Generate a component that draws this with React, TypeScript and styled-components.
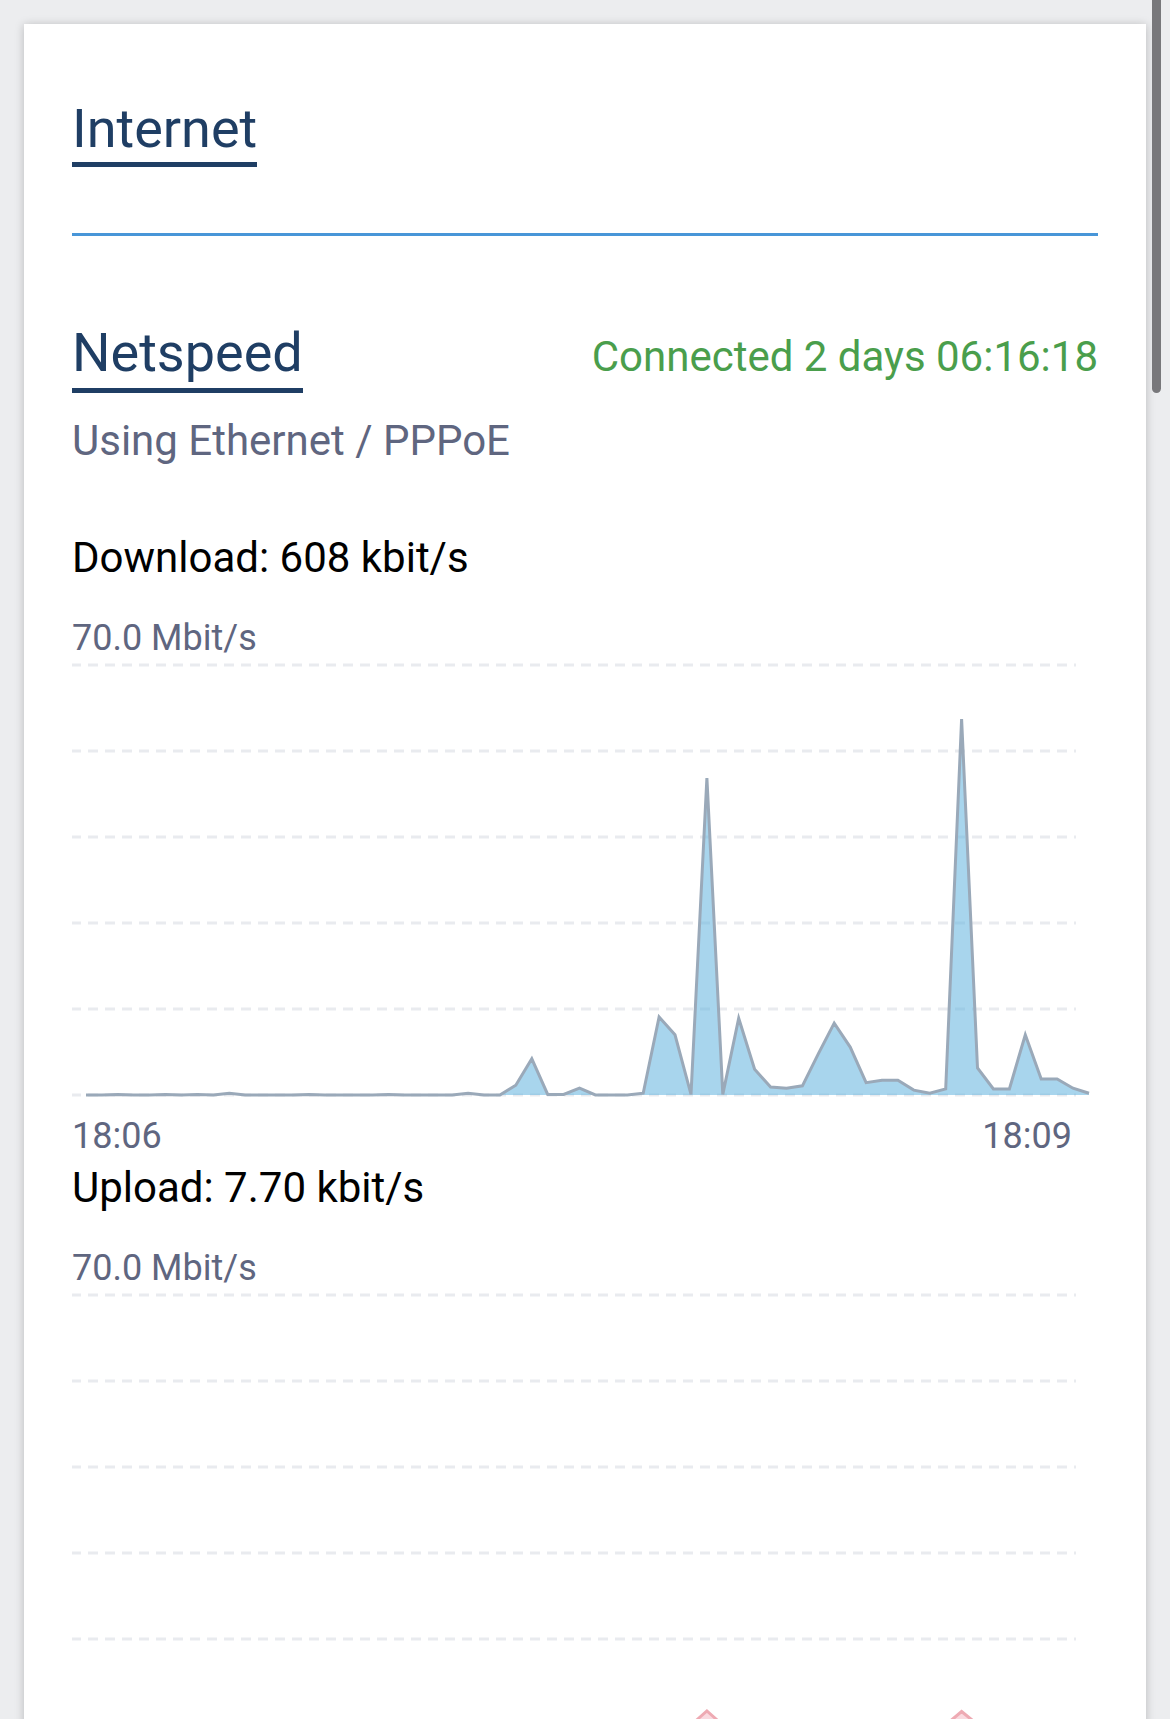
import React from 'react';
import styled, {createGlobalStyle} from 'styled-components';

const GlobalStyle = createGlobalStyle`
  html, body {
    margin: 0;
    padding: 0;
    overflow: hidden;
  }

  body {
    background: #ecedef;
    font-family: Roboto, "Noto Sans", "Liberation Sans", sans-serif;
  }
`

const Page = styled.div`
  padding: 24px;
`

const Card = styled.section`
  background: #ffffff;
  box-shadow: 0 1px 9px rgba(0, 0, 0, 0.22);
  padding: 72px 48px 48px;
`

const Header = styled.div`
  display: flex;
  padding-bottom: 66px;
  border-bottom: 3px solid #4896d8;
`

const Title = styled.h2<{ $gap?: number }>`
  margin: 0;
  font-size: 54px;
  line-height: 66px;
  font-weight: 400;
  color: #1f3e64;
  padding-bottom: ${p => p.$gap ?? 0}px;
  border-bottom: 5px solid #1f3e64;
`

const SectionHead = styled.div`
  display: flex;
  justify-content: space-between;
  align-items: baseline;
  margin-top: 84px;
`

const Status = styled.span`
  font-size: 42px;
  line-height: 50px;
  color: #4a9e4c;
`

const Subtitle = styled.div`
  margin-top: 23px;
  font-size: 42px;
  line-height: 50px;
  color: #5f6680;
`

const Rate = styled.div<{ $top: number }>`
  margin-top: ${p => p.$top}px;
  font-size: 42px;
  line-height: 50px;
  color: #000000;
`

const AxisLabel = styled.div`
  margin-top: 34px;
  font-size: 36px;
  line-height: 42px;
  color: #5f6680;
`

const Plot = styled.svg`
  display: block;
  margin-top: 2px;
  width: 100%;
  height: 440px;
`

const TimeRow = styled.div`
  display: flex;
  justify-content: space-between;
  margin-top: 14px;
  padding-right: 26px;
  font-size: 36px;
  line-height: 42px;
  color: #5f6680;
`

const Scrollbar = styled.div`
  position: fixed;
  top: 0;
  right: 9px;
  width: 9px;
  height: 393px;
  border-radius: 0 0 5px 5px;
  background: #78787b;
`

const download = [
    0, 0, 0.1, 0, 0, 0.1, 0, 0.1, 0, 0.3, 0, 0, 0, 0, 0.1, 0, 0, 0, 0, 0.1, 0, 0, 0, 0,
    0.3, 0, 0, 1.6, 5.9, 0.1, 0.1, 1.1, 0, 0, 0, 0.3, 12.7, 9.8, 0.1, 51.6,
    0.1, 12.5, 4.2, 1.3, 1.1, 1.5, 6.7, 11.7, 7.8, 2.0, 2.4, 2.4, 0.8, 0.3, 1.0, 61.2,
    4.4, 1.0, 1.0, 9.8, 2.6, 2.6, 1.1, 0.3
];

const upload = download.map((v, i) => (i === 39 ? 2.3 : i === 55 ? 2.2 : Math.min(v * 0.02, 0.15)));

const MAX = 70;
const TOP = 4;
const STEP = 86;
const BASE = TOP + STEP * 5;
const WIDTH = 1026;

type ChartProps = { data: number[], stroke: string, fill: string };

const AreaChart = ({data, stroke, fill}: ChartProps) => {
    const x0 = 14;
    const dx = 15.92;
    const pts = data.map((v, i) => `${(x0 + i * dx).toFixed(1)},${(BASE - (v / MAX) * (BASE - TOP)).toFixed(1)}`);
    const last = x0 + (data.length - 1) * dx;

    return (
        <Plot viewBox={`0 0 ${WIDTH} 440`} preserveAspectRatio="none">
            {[0, 1, 2, 3, 4, 5].map(k => (
                <line key={k} x1={-1} x2={1004} y1={TOP + k * STEP} y2={TOP + k * STEP}
                      stroke="#e9ebef" strokeWidth={3} strokeDasharray="10 7"/>
            ))}
            <polygon points={`${x0},${BASE} ${pts.join(' ')} ${last.toFixed(1)},${BASE}`} fill={fill}/>
            <polyline points={pts.join(' ')} fill="none" stroke={stroke} strokeWidth={3} strokeLinejoin="miter"/>
        </Plot>
    );
}

const App = () => {
    return (
        <Page>
            <GlobalStyle/>
            <Card>
                <Header>
                    <Title>Internet</Title>
                </Header>

                <SectionHead>
                    <Title $gap={2}>Netspeed</Title>
                    <Status>Connected 2 days 06:16:18</Status>
                </SectionHead>
                <Subtitle>Using Ethernet / PPPoE</Subtitle>

                <Rate $top={67}>Download: 608 kbit/s</Rate>
                <AxisLabel>70.0 Mbit/s</AxisLabel>
                <AreaChart data={download} stroke="#9aa9b9" fill="rgba(97, 179, 222, 0.55)"/>
                <TimeRow>
                    <span>18:06</span>
                    <span>18:09</span>
                </TimeRow>

                <Rate $top={6}>Upload: 7.70 kbit/s</Rate>
                <AxisLabel>70.0 Mbit/s</AxisLabel>
                <AreaChart data={upload} stroke="#eeaab3" fill="rgba(240, 150, 165, 0.35)"/>
            </Card>
            <Scrollbar/>
        </Page>
    );
}

export default App;
